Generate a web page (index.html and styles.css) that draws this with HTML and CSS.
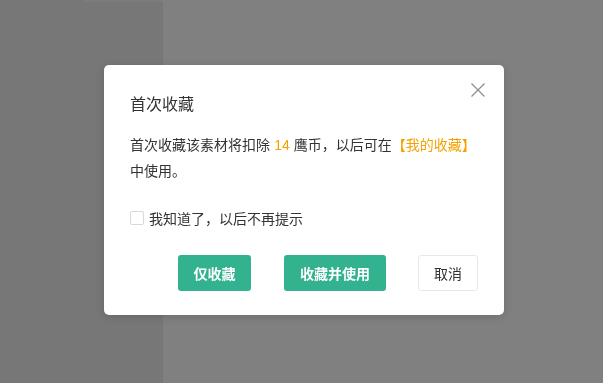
FILE: index.html
```html
<!DOCTYPE html>
<html lang="zh-CN">
<head>
<meta charset="utf-8">
<title>首次收藏</title>
<link rel="stylesheet" href="styles.css">
</head>
<body>
<div class="page">
  <aside class="side"><div class="side-top"></div></aside>
  <main class="main"></main>
</div>
<div class="overlay">
  <div class="dialog">
    <button class="close" aria-label="关闭">
      <svg width="16" height="16" viewBox="0 0 16 16"><path d="M1.5 1.5L14.5 14.5M14.5 1.5L1.5 14.5" stroke="#8c8c8c" stroke-width="1.2" fill="none"/></svg>
    </button>
    <div class="title">首次收藏</div>
    <div class="body">首次收藏该素材将扣除 <span class="hl num">14</span> 鹰币，以后可在<span class="hl">【我的收藏】</span>中使用。</div>
    <label class="check"><span class="box"></span>我知道了，以后不再提示</label>
    <div class="actions">
      <button class="btn primary b1">仅收藏</button>
      <button class="btn primary b2">收藏并使用</button>
      <button class="btn ghost">取消</button>
    </div>
  </div>
</div>
</body>
</html>
```
FILE: styles.css
```css
html, body { margin: 0; padding: 0; }
body {
  width: 603px; height: 383px; overflow: hidden;
  font-family: "Noto Sans CJK SC", "Noto Sans", sans-serif;
  background: #808080;
}
.page { display: flex; height: 383px; }
.side { width: 163px; background: #777777; position: relative; }
.side-top { margin-left: 84px; height: 2px; background: #7c7c7c; }
.main { flex: 1; background: #808080; }
.overlay {
  position: fixed; inset: 0;
  display: flex; align-items: center; justify-content: center;
  padding: 0 0 0 5px;
  box-sizing: border-box;
}
.dialog {
  position: relative;
  width: 400px; height: 250px; box-sizing: border-box;
  margin-top: -3px;
  background: #fff; border-radius: 5px;
  box-shadow: 0 2px 8px rgba(0,0,0,0.15);
  padding: 27px 26px 24px 26px;
  display: flex; flex-direction: column;
  color: #333;
}
.close {
  position: absolute; right: 18px; top: 17px;
  width: 16px; height: 16px; padding: 0; border: 0; background: none;
  display: flex;
}
.title { font-size: 16px; line-height: 22px; color: #333; }
.body { margin-top: 18px; font-size: 14px; line-height: 25px; color: #333; }
.hl { color: #f5a200; }
.num { font-family: "Liberation Sans", sans-serif; padding: 0 1px; }
.check {
  margin-top: 25px; display: flex; align-items: center;
  font-size: 14px; line-height: 20px; color: #333;
}
.box {
  width: 12px; height: 12px; border: 1px solid #d9d9d9; border-radius: 2px;
  margin-right: 5px; background: #fff;
}
.actions { margin-top: 27px; display: flex; justify-content: flex-end; gap: 32px; }
.btn {
  height: 36px; border-radius: 3px; font-family: inherit; font-size: 14px;
  padding: 0; cursor: pointer;
}
.primary { background: #33b28f; border: 0; color: #fff; font-weight: bold; }
.b1 { width: 73px; margin-right: 1px; }
.b2 { width: 102px; }
.ghost { width: 60px; background: #fff; border: 1px solid #e6e8ea; color: #333; }
```
